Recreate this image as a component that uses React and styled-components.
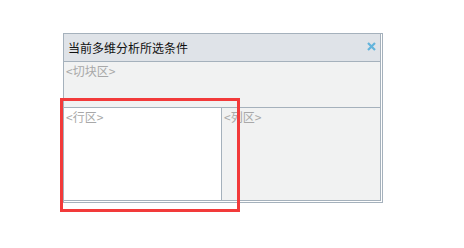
import styled, { createGlobalStyle } from 'styled-components';

const Global = createGlobalStyle`
  body {
    margin: 0;
    background: #fff;
    font-family: "Noto Sans CJK SC", "Noto Sans", sans-serif;
  }
`;

const Page = styled.div`
  position: relative;
  width: 464px;
  height: 248px;
  padding: 33px 0 0 63px;
  box-sizing: border-box;
`;

const Frame = styled.div`
  width: 320px;
  height: 170px;
  box-sizing: border-box;
  border: 1px solid #a5b1bc;
  padding: 0 1px 1px 0;
`;

const Inner = styled.div`
  height: 100%;
  box-sizing: border-box;
  border-right: 1px solid #a5b1bc;
  border-bottom: 1px solid #a5b1bc;
  display: flex;
  flex-direction: column;
  background: #f1f2f2;
`;

const Header = styled.div`
  height: 28px;
  box-sizing: border-box;
  border-bottom: 1px solid #a5b1bc;
  background: #dfe3e8;
  display: flex;
  align-items: center;
  justify-content: space-between;
  padding: 0 4px 0 4px;
  font-size: 12px;
  color: #111;
`;

const Close = styled.svg`
  width: 9px;
  height: 9px;
  margin-top: -2px;
`;

const Zone = styled.div`
  height: 46px;
  box-sizing: border-box;
  border-bottom: 1px solid #a5b1bc;
`;

const Row = styled.div`
  flex: 1;
  display: flex;
`;

const Cell = styled.div`
  width: ${p => (p.$w ? `${p.$w}px` : 'auto')};
  flex: ${p => (p.$w ? 'none' : 1)};
  box-sizing: border-box;
  background: ${p => (p.$white ? '#fff' : '#f1f2f2')};
  border-right: ${p => (p.$white ? '1px solid #a5b1bc' : 'none')};
`;

const Hint = styled.div`
  font-size: 12px;
  line-height: 16px;
  color: #a8a8a8;
  padding: 1px 0 0 2px;
`;

const Mark = styled.div`
  position: absolute;
  left: 60px;
  top: 98px;
  width: 180px;
  height: 114px;
  box-sizing: border-box;
  border: 3px solid #f23a3a;
`;

export default function App() {
  return (
    <Page>
      <Global />
      <Frame>
        <Inner>
          <Header>
            <span>当前多维分析所选条件</span>
            <Close viewBox="0 0 9 9">
              <path d="M1 1L8 8M8 1L1 8" stroke="#63b4dc" strokeWidth="2.2" />
            </Close>
          </Header>
          <Zone>
            <Hint>&lt;切块区&gt;</Hint>
          </Zone>
          <Row>
            <Cell $w={158} $white>
              <Hint>&lt;行区&gt;</Hint>
            </Cell>
            <Cell>
              <Hint>&lt;列区&gt;</Hint>
            </Cell>
          </Row>
        </Inner>
      </Frame>
      <Mark />
    </Page>
  );
}
